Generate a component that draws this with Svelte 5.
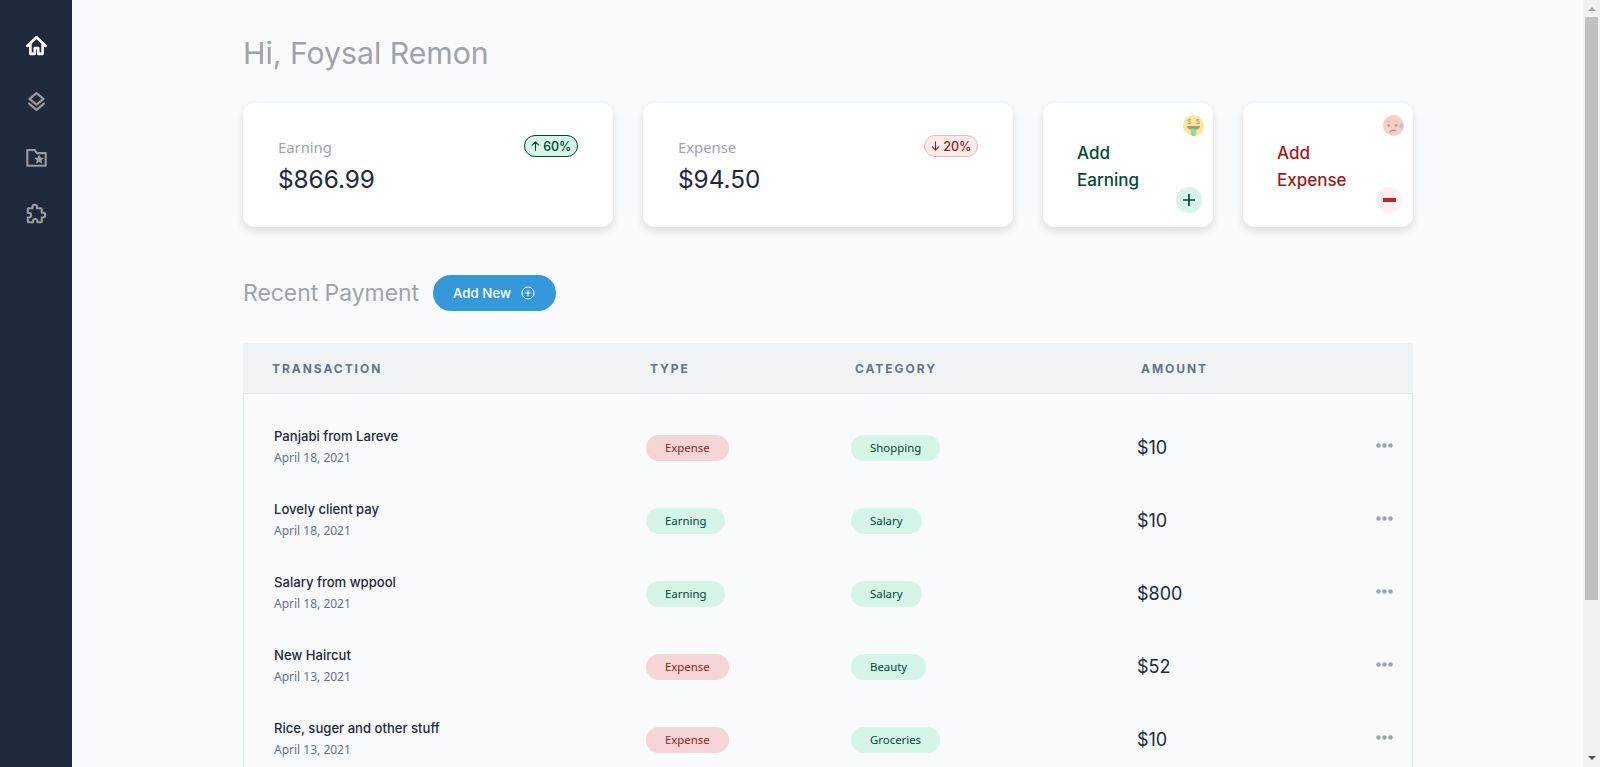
<script>
  const rows = [
    { name: 'Panjabi from Lareve', date: 'April 18, 2021', type: 'Expense', category: 'Shopping', amount: '$10' },
    { name: 'Lovely client pay', date: 'April 18, 2021', type: 'Earning', category: 'Salary', amount: '$10' },
    { name: 'Salary from wppool', date: 'April 18, 2021', type: 'Earning', category: 'Salary', amount: '$800' },
    { name: 'New Haircut', date: 'April 13, 2021', type: 'Expense', category: 'Beauty', amount: '$52' },
    { name: 'Rice, suger and other stuff', date: 'April 13, 2021', type: 'Expense', category: 'Groceries', amount: '$10' }
  ];
</script>

<div class="page">
  <nav class="sidebar">
    <svg class="nav-icon active" viewBox="0 0 24 24" fill="none" stroke="currentColor" stroke-width="3" stroke-linecap="round" stroke-linejoin="round">
      <path d="M1.500 12.500 12 2.500l10.500 10" />
      <path d="M5 11v10.500h5V15h4v6.500h5V11" />
    </svg>
    <svg class="nav-icon" viewBox="0 0 24 24" fill="none" stroke="currentColor" stroke-width="2.500" stroke-linecap="round" stroke-linejoin="round">
      <path d="M12 2.500 4 9l8 6.500L20 9l-8-6.500z" />
      <path d="m3.500 14.500 8.500 7 8.500-7" />
    </svg>
    <svg class="nav-icon" viewBox="0 0 24 24" fill="none" stroke="currentColor" stroke-width="2.400" stroke-linejoin="round">
      <path d="M1.500 3.500h8.500l2.500 3.500h10v14.500h-21V3.500z" />
      <path fill="currentColor" stroke="none" d="m15 8.500 1.800 3.500 3.700.5-2.700 2.700.7 3.800-3.500-1.800-3.500 1.800.7-3.800-2.700-2.700 3.700-.5z" />
    </svg>
    <svg class="nav-icon" viewBox="0 0 24 24" fill="none" stroke="currentColor" stroke-width="2.400" stroke-linejoin="round">
      <path d="M10 2c1.500 0 2.500 1 2.500 2.500V6H17a1 1 0 0 1 1 1v4h1c1.600 0 3 1 3 2.700S20.600 16.500 19 16.500h-1V21a1 1 0 0 1-1 1h-4v-1.200c0-1.500-1.100-2.500-2.500-2.500S8 19.300 8 20.800V22H3a1 1 0 0 1-1-1v-4.500h1.200c1.500 0 2.600-1.100 2.600-2.600S4.700 11.300 3.200 11.300H2V7a1 1 0 0 1 1-1h4.500V4.500C7.500 3 8.500 2 10 2z" />
    </svg>
  </nav>

  <main class="main">
    <h1 class="greeting">Hi, Foysal Remon</h1>

    <section class="cards">
      <div class="card stat">
        <div>
          <div class="stat-label">Earning</div>
          <div class="stat-value">$866.99</div>
        </div>
        <span class="badge up">
          <svg viewBox="0 0 12 12" fill="none" stroke="currentColor" stroke-width="1.200" stroke-linecap="round" stroke-linejoin="round"><path d="M6 10.500V1.500M2.500 5 6 1.500 9.500 5" /></svg>
          60%
        </span>
      </div>
      <div class="card stat">
        <div>
          <div class="stat-label">Expense</div>
          <div class="stat-value">$94.50</div>
        </div>
        <span class="badge down">
          <svg viewBox="0 0 12 12" fill="none" stroke="currentColor" stroke-width="1.200" stroke-linecap="round" stroke-linejoin="round"><path d="M6 1.500v9M2.500 7 6 10.500 9.500 7" /></svg>
          20%
        </span>
      </div>
      <div class="card action earning">
        <svg class="emoji" viewBox="0 0 20 20">
          <circle cx="10" cy="10" r="10" fill="#fde7a0" />
          <text x="6" y="8.500" class="dollar">$</text>
          <text x="14" y="8.500" class="dollar">$</text>
          <path d="M3.500 10.500h13c-.5 2.500-3 4-6.500 4s-6-1.500-6.500-4z" fill="#a09a80" />
          <path d="M7.500 13h5v4.500a2.500 2.500 0 0 1-5 0z" fill="#8fd99a" />
        </svg>
        Add<br />Earning
        <span class="round green">
          <svg viewBox="0 0 14 14" fill="none" stroke="currentColor" stroke-width="1.700"><path d="M7 1v12M1 7h12" /></svg>
        </span>
      </div>
      <div class="card action expense">
        <svg class="emoji" viewBox="0 0 20 20">
          <circle cx="10" cy="10" r="10" fill="#fbd0c4" />
          <circle cx="5.500" cy="10" r="1.200" fill="#a89a8c" />
          <circle cx="12.500" cy="10" r="1.200" fill="#a89a8c" />
          <path d="M3.500 6.500 7 5.500M11 5.500l3.500 1" stroke="#c8ae98" fill="none" stroke-width=".8" />
          <path d="M6.500 16c1.500-1.800 4-2 6-1" stroke="#a08a7c" fill="none" stroke-width="1" />
          <path d="M17.500 7c1.300 2 2 3 2 4.200a2 2 0 0 1-4 0c0-1.200.7-2.200 2-4.200z" fill="#9ccbee" />
        </svg>
        Add<br />Expense
        <span class="round red">
          <span class="minus"></span>
        </span>
      </div>
    </section>

    <section class="recent-head">
      <h2>Recent Payment</h2>
      <button class="add-btn">
        Add New
        <svg viewBox="0 0 14 14" fill="none" stroke="currentColor" stroke-width="1"><circle cx="7" cy="7" r="6" /><path d="M7 4.200v5.600M4.200 7h5.600" /></svg>
      </button>
    </section>

    <section class="table">
      <div class="thead">
        <span>TRANSACTION</span>
        <span>TYPE</span>
        <span>CATEGORY</span>
        <span>AMOUNT</span>
      </div>
      <div class="tbody">
        {#each rows as row}
          <div class="row">
            <div class="who">
              <div class="name">{row.name}</div>
              <div class="date">{row.date}</div>
            </div>
            <div><span class="pill" class:red-pill={row.type === 'Expense'}>{row.type}</span></div>
            <div><span class="pill">{row.category}</span></div>
            <div class="amount">{row.amount}</div>
            <svg class="dots" viewBox="0 0 17 5" fill="currentColor">
              <circle cx="2.500" cy="2.500" r="2.200" />
              <circle cx="8.500" cy="2.500" r="2.200" />
              <circle cx="14.500" cy="2.500" r="2.200" />
            </svg>
          </div>
        {/each}
      </div>
    </section>
  </main>

  <div class="scrollbar">
    <span class="arrow up-arrow"></span>
    <span class="thumb"></span>
    <span class="arrow down-arrow"></span>
  </div>
</div>

<style>
  :global(body) {
    margin: 0;
    background: #f9fafc;
    overflow: hidden;
  }

  .page {
    display: flex;
    height: 767px;
    overflow: hidden;
    font-family: Inter, "Liberation Sans", sans-serif;
    color: #1e293b;
  }

  .sidebar {
    flex: 0 0 72px;
    background: #1f2a3c;
    display: flex;
    flex-direction: column;
    align-items: center;
    gap: 35px;
    padding-top: 35px;
    box-sizing: border-box;
  }

  .nav-icon {
    width: 21px;
    height: 21px;
    color: #9b9b9b;
  }

  .nav-icon.active {
    color: #fff;
  }

  .main {
    flex: 1;
    padding-left: 171px;
    min-width: 0;
  }

  .greeting {
    margin: 33px 0 0;
    font-size: 30.200px;
    line-height: 40px;
    font-weight: 400;
    color: #9ca3af;
  }

  .cards {
    display: flex;
    gap: 30px;
    width: 1170px;
    margin-top: 30px;
  }

  .card {
    background: #fff;
    border-radius: 12px;
    height: 124px;
    box-sizing: border-box;
    box-shadow: 0 4px 8px rgba(0, 0, 0, 0.12);
    position: relative;
  }

  .stat {
    width: 370px;
    padding: 32px 35px 32px 35px;
    display: flex;
    justify-content: space-between;
    align-items: flex-start;
  }

  .stat-label {
    font-family: "Noto Sans", sans-serif;
    font-size: 14.800px;
    line-height: 24px;
    color: #9ca3af;
  }

  .stat-value {
    font-size: 24.300px;
    line-height: 36px;
    margin: 2px 0 0;
  }

  .badge {
    display: inline-flex;
    align-items: center;
    gap: 2px;
    height: 22px;
    box-sizing: border-box;
    padding: 0 5.500px;
    border-radius: 11px;
    font-size: 12.500px;
    font-weight: 500;
    border: 1px solid;
  }

  .badge svg {
    width: 11px;
    height: 12px;
  }

  .badge.up {
    background: #d5f5e9;
    border-color: #014737;
    color: #014737;
  }

  .badge.down {
    background: #fdecec;
    border-color: #f8b4b4;
    color: #9b1c1c;
  }

  .action {
    width: 170px;
    padding: 37px 0 0 34px;
    font-size: 17px;
    line-height: 27px;
    font-weight: 500;
  }

  .action.earning {
    color: #014737;
  }

  .action.expense {
    color: #9b1c1c;
  }

  .emoji {
    position: absolute;
    top: 12px;
    right: 9px;
    width: 21px;
    height: 21px;
  }

  .dollar {
    font-family: "Liberation Sans", sans-serif;
    font-size: 7px;
    font-weight: 400;
    text-anchor: middle;
    fill: #a09a80;
  }

  .round {
    position: absolute;
    right: 11px;
    bottom: 14px;
    width: 26px;
    height: 26px;
    border-radius: 50%;
    display: flex;
    align-items: center;
    justify-content: center;
  }

  .round svg {
    width: 14px;
    height: 14px;
  }

  .round.green {
    background: #d5f5e9;
    color: #014737;
  }

  .round.red {
    background: #fdf0f0;
  }

  .minus {
    width: 13px;
    height: 4px;
    background: #c02626;
  }

  .recent-head {
    display: flex;
    align-items: center;
    gap: 14px;
    margin-top: 48px;
  }

  h2 {
    margin: 0;
    font-size: 22.900px;
    line-height: 36px;
    font-weight: 400;
    color: #9ca3af;
  }

  .add-btn {
    display: inline-flex;
    align-items: center;
    gap: 10px;
    height: 36px;
    width: 123px;
    padding: 0 0 0 20px;
    border: none;
    border-radius: 18px;
    background: #3498db;
    color: #fff;
    font-family: Inter, sans-serif;
    font-size: 13.300px;
    font-weight: 500;
  }

  .add-btn svg {
    width: 14px;
    height: 14px;
  }

  .table {
    width: 1170px;
    margin-top: 32px;
  }

  .thead {
    display: grid;
    grid-template-columns: 378px 205px 286px 1fr;
    align-items: center;
    height: 51px;
    padding-left: 29px;
    box-sizing: border-box;
    background: #f1f4f7;
    border-bottom: 1px solid #e2e8f0;
    font-size: 12px;
    font-weight: 700;
    letter-spacing: 1.950px;
    color: #64748b;
  }

  .tbody {
    border: 1px solid #e2e8f0;
    border-top: none;
    padding-top: 17px;
  }

  .row {
    display: grid;
    grid-template-columns: 372px 205px 286px 1fr 17px;
    align-items: center;
    height: 73px;
    padding: 0 19px 0 30px;
  }

  .who {
    margin-bottom: 2px;
  }

  .name {
    font-size: 13.100px;
    line-height: 20px;
    font-weight: 500;
    color: #1e293b;
  }

  .date {
    font-family: "Noto Sans", sans-serif;
    font-size: 12px;
    line-height: 20px;
    margin-top: 2px;
    color: #64748b;
  }

  .pill {
    display: inline-block;
    font-family: "Noto Sans", sans-serif;
    font-size: 11.400px;
    line-height: 26px;
    padding: 0 19px;
    border-radius: 13px;
    background: #d5f5e9;
    color: #014737;
  }

  .pill.red-pill {
    background: #f5d5d5;
    color: #9b1c1c;
  }

  .amount {
    font-size: 18px;
    margin-bottom: 1px;
  }

  .dots {
    width: 17px;
    height: 5px;
    color: #9ca3af;
    margin-bottom: 4px;
  }

  .scrollbar {
    flex: 0 0 17px;
    background: #f1f1f1;
    position: relative;
  }

  .thumb {
    position: absolute;
    top: 17px;
    left: 2px;
    width: 13px;
    height: 583px;
    background: #c1c1c1;
  }

  .arrow {
    position: absolute;
    left: 5px;
    width: 0;
    height: 0;
    border-left: 4px solid transparent;
    border-right: 4px solid transparent;
  }

  .up-arrow {
    top: 7px;
    border-bottom: 4px solid #a3a3a3;
  }

  .down-arrow {
    bottom: 7px;
    border-top: 4px solid #505050;
  }
</style>
